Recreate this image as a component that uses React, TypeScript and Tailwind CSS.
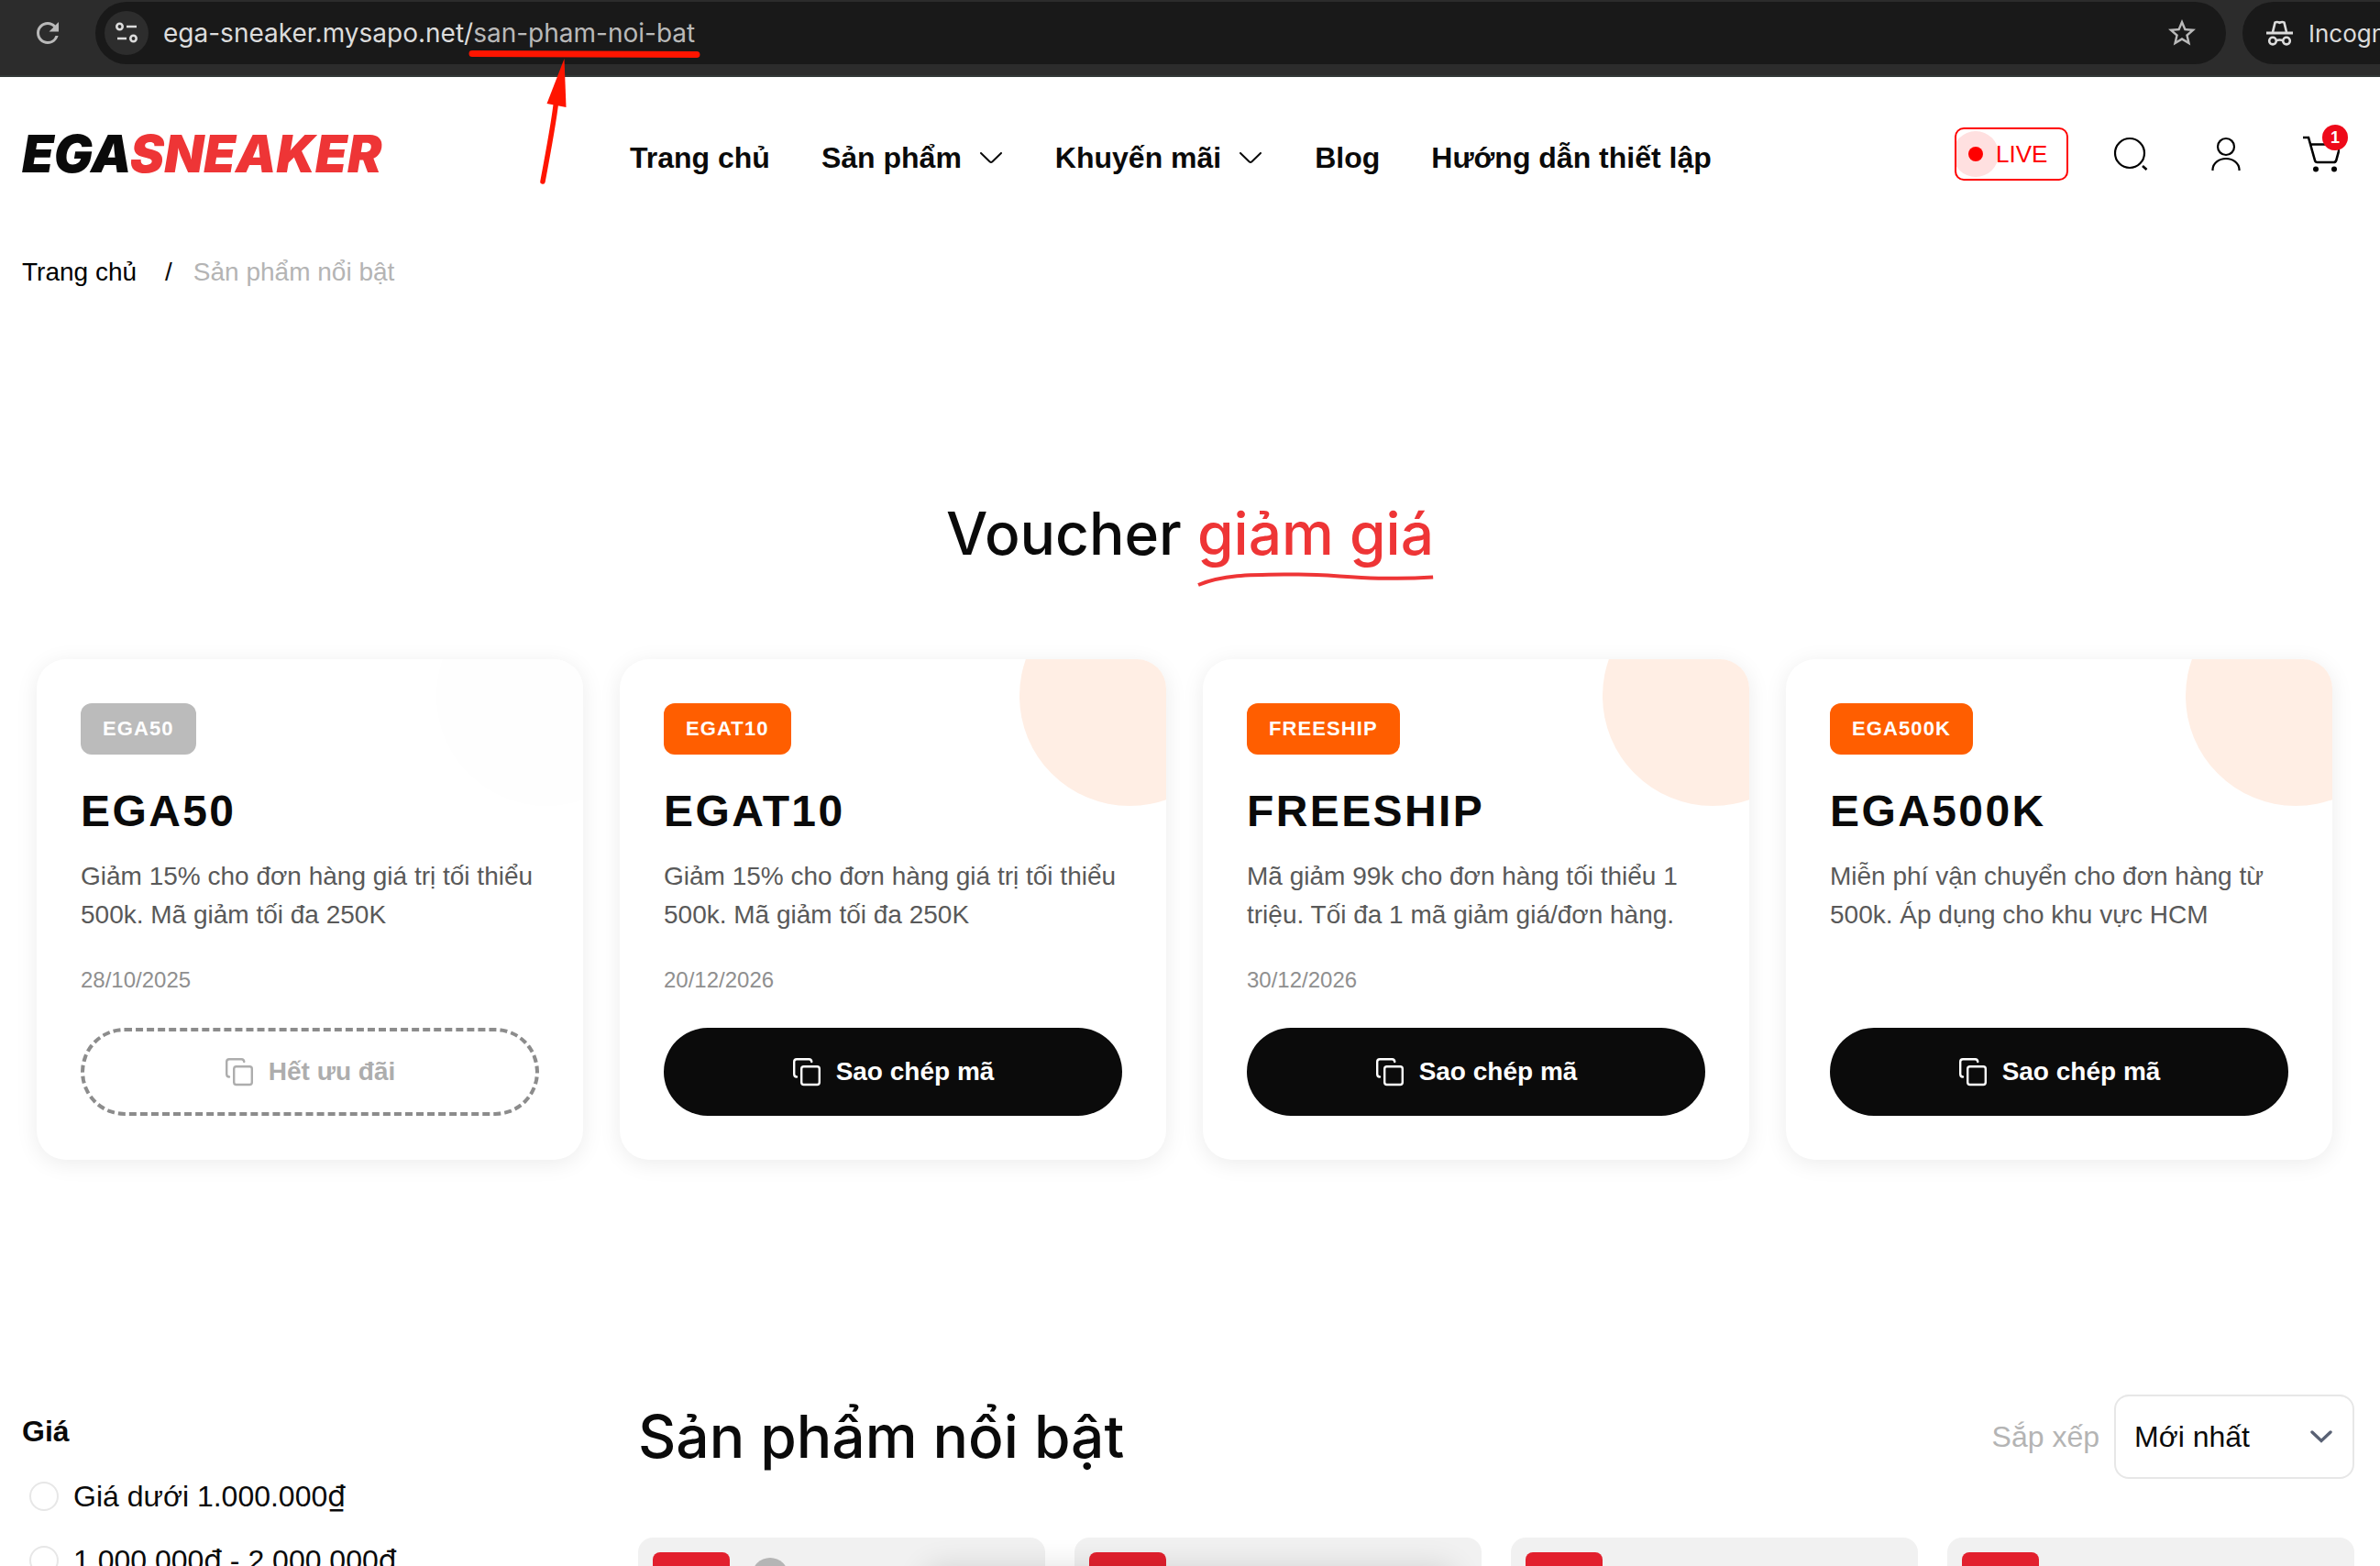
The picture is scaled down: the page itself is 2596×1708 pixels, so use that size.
import { MdRefresh, MdStarBorder } from "react-icons/md";

type Voucher = {
  code: string;
  description: string;
  expires?: string;
  soldOut?: boolean;
};

const vouchers: Voucher[] = [
  {
    code: "EGA50",
    description:
      "Giảm 15% cho đơn hàng giá trị tối thiểu 500k. Mã giảm tối đa 250K",
    expires: "28/10/2025",
    soldOut: true,
  },
  {
    code: "EGAT10",
    description:
      "Giảm 15% cho đơn hàng giá trị tối thiểu 500k. Mã giảm tối đa 250K",
    expires: "20/12/2026",
  },
  {
    code: "FREESHIP",
    description:
      "Mã giảm 99k cho đơn hàng tối thiểu 1 triệu. Tối đa 1 mã giảm giá/đơn hàng.",
    expires: "30/12/2026",
  },
  {
    code: "EGA500K",
    description: "Miễn phí vận chuyển cho đơn hàng từ 500k. Áp dụng cho khu vực HCM",
  },
];

const navItems = [
  { label: "Trang chủ" },
  { label: "Sản phẩm", hasMenu: true },
  { label: "Khuyến mãi", hasMenu: true },
  { label: "Blog" },
  { label: "Hướng dẫn thiết lập" },
];

const priceRanges = ["Giá dưới 1.000.000₫", "1.000.000₫ - 2.000.000₫"];

const BrowserBar = () => (
  <div className="relative flex h-[84px] items-start border-b-2 border-[#323837] bg-[#2c2c2c] pt-[2px] font-[Inter,sans-serif] text-[#dcdcdc]">
    <button aria-label="Reload" className="flex h-[68px] w-[104px] items-center justify-center text-[#b9b9b9]">
      <MdRefresh className="size-9" />
    </button>
    <div className="flex h-[68px] min-w-0 flex-1 items-center rounded-full bg-[#191919] pr-[30px] pl-[10px]">
      <button aria-label="Site information" className="flex size-12 items-center justify-center rounded-full bg-[#2d2d2d]">
        <svg viewBox="0 0 24 24" className="size-6" fill="none" stroke="#dcdcdc" strokeWidth="2.6">
          <circle cx="4.5" cy="5" r="3.2" />
          <path d="M12 5h11M2 18h10" />
          <circle cx="19.5" cy="18" r="3.2" />
        </svg>
      </button>
      <p className="ml-4 flex-1 text-[28px] leading-10 whitespace-nowrap">
        ega-sneaker.mysapo.net/<span className="text-[#b9b9b9]">san-pham-noi-bat</span>
      </p>
      <button aria-label="Bookmark" className="text-[#b9b9b9]">
        <MdStarBorder className="size-9" />
      </button>
    </div>
    <div className="ml-[18px] flex h-[68px] w-[150px] items-center overflow-hidden rounded-l-full bg-[#191919] pl-[26px]">
      <svg viewBox="0 0 29 28" className="h-7 w-[29px] shrink-0" fill="none" stroke="#dcdcdc" strokeWidth="2.6">
        <path d="M0 14h29" strokeWidth="3" />
        <path d="M7 13 L9.5 2.6 Q11.5 1.4 14.5 2.8 Q17.5 1.4 19.5 2.6 L22 13" />
        <circle cx="7" cy="22.6" r="3.8" />
        <circle cx="22" cy="22.6" r="3.8" />
        <path d="M10.6 22.4Q14.5 20.6 18.4 22.4" />
      </svg>
      <span className="ml-[17px] text-[26px] whitespace-nowrap">Incognito</span>
    </div>
    {/* red marker drawn over the path part of the address */}
    <svg className="pointer-events-none absolute top-0 left-[500px] z-10" width="280" height="210" viewBox="500 0 280 210">
      <path d="M515 58.5L760 59.5" stroke="#ff1500" strokeWidth="7" strokeLinecap="round" />
      <path d="M606.5 112Q604 134 592 198" stroke="#ff1500" strokeWidth="5.5" strokeLinecap="round" fill="none" />
      <path d="M615.5 64L596.5 113L617.5 117Z" fill="#ff1500" />
    </svg>
  </div>
);

const NavChevron = () => (
  <svg viewBox="0 0 24 12" className="mr-[2px] h-3 w-6" fill="none" stroke="currentColor" strokeWidth="2" strokeLinecap="round">
    <path d="M1 1L10.5 10.3Q12 11.5 13.5 10.3L23 1" />
  </svg>
);

const Header = () => (
  <header className="flex h-[168px] items-center pr-11 pl-6">
    <a href="#" className="w-[663px] text-[56px] leading-none font-black italic font-[Inter,sans-serif]">
      EGA<span className="text-[#ee3536]">SNEAKER</span>
    </a>
    <nav className="flex flex-1 items-center gap-14 pt-2 text-[32px] leading-10 font-bold">
      {navItems.map((item) => (
        <a key={item.label} href="#" className="flex items-center gap-5 whitespace-nowrap">
          {item.label}
          {item.hasMenu && <NavChevron />}
        </a>
      ))}
    </nav>
    <div className="flex items-center">
      <a href="#" className="relative flex h-[58px] w-[124px] items-center overflow-hidden rounded-[10px] border-2 border-[#ff0000] text-[26px] text-[#ff0000]">
        <span className="-ml-1 flex size-[50px] items-center justify-center rounded-full bg-[#ffe0e0]">
          <span className="size-4 rounded-full bg-[#ff0000]" />
        </span>
        <span className="-ml-[3px]">LIVE</span>
      </a>
      <button aria-label="Tìm kiếm" className="ml-12">
        <svg viewBox="0 0 40 40" className="size-10" fill="none" stroke="#000" strokeWidth="2.2">
          <circle cx="19" cy="19" r="16" />
          <path d="M33 33L37.5 37" strokeWidth="2.6" />
        </svg>
      </button>
      <button aria-label="Tài khoản" className="ml-16">
        <svg viewBox="0 0 40 40" className="size-10" fill="none" stroke="#000" strokeWidth="2.2">
          <circle cx="20" cy="12" r="9" />
          <path d="M5.5 38V36.5C6 30 12 25 20 25S34 30 34.5 36.5V38" />
        </svg>
      </button>
      <button aria-label="Giỏ hàng" className="relative ml-16">
        <svg viewBox="0 0 40 40" className="size-10" fill="none" stroke="#000" strokeWidth="2.6">
          <path d="M0 2H6L13 27Q13.5 29 15.5 29H33.5Q35.5 29 36.2 27L41 9.5H8.5" />
          <circle cx="14" cy="36.5" r="3" fill="#000" stroke="none" />
          <circle cx="34" cy="36.5" r="3" fill="#000" stroke="none" />
        </svg>
        <span className="absolute -top-3 left-[21px] flex size-7 items-center justify-center rounded-full bg-[#ee0a1a] text-[18px] leading-none font-bold text-white">
          1
        </span>
      </button>
    </div>
  </header>
);

const CopyIcon = () => (
  <svg viewBox="0 0 32 32" className="size-8" fill="none" stroke="currentColor" strokeWidth="2.4" strokeLinecap="round">
    <rect x="10.2" y="10.2" width="19.6" height="19.8" rx="2.5" />
    <path d="M5 21.5Q2.2 21.5 2.2 18.5V5Q2.2 2.2 5 2.2H18.5Q21 2.2 21.3 5" />
  </svg>
);

const VoucherCard = ({ code, description, expires, soldOut }: Voucher) => (
  <article className="relative flex flex-col items-start overflow-hidden rounded-[32px] bg-white p-12 shadow-[0_4px_24px_rgba(0,0,0,0.08)]">
    <div className={`absolute -top-20 -right-20 size-60 rounded-full ${soldOut ? "bg-[#fefefe]" : "bg-[#ffeee4]"}`} />
    <span
      className={`rounded-xl px-6 py-3 text-[22px] leading-8 font-bold tracking-wider text-white ${
        soldOut ? "bg-[#bbbbbb]" : "bg-[#ff5e00]"
      }`}
    >
      {code}
    </span>
    <h3 className="mt-8 text-5xl leading-[60px] font-bold tracking-wider">{code}</h3>
    <p className="mt-5 text-[28px] leading-[42px] text-[#595959]">{description}</p>
    <p className="mt-8 h-9 text-2xl leading-9 text-[#8f8f8f]">{expires}</p>
    <button
      disabled={soldOut}
      className={`mt-[34px] flex h-24 w-full items-center justify-center gap-4 rounded-full text-[28px] font-bold ${
        soldOut ? "border-4 border-dashed border-[#8c8c8c] text-[#adadad]" : "bg-[#0b0b0b] text-white"
      }`}
    >
      <CopyIcon />
      {soldOut ? "Hết ưu đãi" : "Sao chép mã"}
    </button>
  </article>
);

const Vouchers = () => (
  <section className="mt-[200px] px-10">
    <h2 className="text-center font-[Inter,sans-serif] text-[64px] leading-[80px] font-medium">
      Voucher{" "}
      <span className="relative inline-block text-[#ee3536]">
        giảm giá
        <svg viewBox="0 0 252 16" preserveAspectRatio="none" className="absolute top-[82px] left-0 h-4 w-full" fill="none">
          <path d="M1 14C30 2 60 3 105 2.5S175 10 251 5.5" stroke="#ee3536" strokeWidth="4" />
        </svg>
      </span>
    </h2>
    <div className="mt-[97px] mr-3 grid grid-cols-4 gap-10">
      {vouchers.map((voucher) => (
        <VoucherCard key={voucher.code} {...voucher} />
      ))}
    </div>
  </section>
);

const PriceFilter = () => (
  <aside className="w-[640px] shrink-0 pt-5">
    <h3 className="text-[32px] leading-10 font-bold">Giá</h3>
    <div className="mt-4">
      {priceRanges.map((range) => (
        <label key={range} className="flex h-[70px] items-center gap-4 pl-2 text-[32px]">
          <input type="radio" name="price" className="size-8 appearance-none rounded-full border-2 border-[#e7e7e7] checked:bg-black" />
          <span>
            {range.split(/(₫)/).map((part, i) =>
              part === "₫" ? (
                <span key={i} className="font-[Inter,sans-serif]">
                  ₫
                </span>
              ) : (
                part
              ),
            )}
          </span>
        </label>
      ))}
    </div>
  </aside>
);

const ProductCard = ({ swatch }: { swatch?: boolean }) => (
  <div className="flex h-[444px] gap-6 rounded-2xl bg-[#f1f1f1] p-4">
    <div className="h-12 w-[84px] rounded-lg bg-[#e2202e]" />
    {swatch && <div className="mt-[6px] size-10 rounded-full bg-[#b5b5b5]" />}
  </div>
);

const Products = () => (
  <section className="min-w-0 flex-1">
    <div className="flex items-center">
      <h1 className="flex-1 font-[Inter,sans-serif] text-[64px] leading-[80px] font-medium">Sản phẩm nổi bật</h1>
      <label htmlFor="sort" className="mr-4 text-[32px] text-[#b4b4b4]">
        Sắp xếp
      </label>
      <div className="relative">
        <select id="sort" className="h-[92px] w-[262px] appearance-none rounded-2xl border-2 border-[#e7e7e7] bg-transparent pl-5 text-[32px]">
          <option>Mới nhất</option>
        </select>
        <svg viewBox="0 0 24 14" className="pointer-events-none absolute top-[39px] right-6 h-[14px] w-6" fill="none" stroke="#596174" strokeWidth="3.4" strokeLinecap="round">
          <path d="M2 2L12 11.5L22 2" />
        </svg>
      </div>
    </div>
    <div className="mt-16 grid grid-cols-4 gap-8">
      <ProductCard swatch />
      <ProductCard />
      <ProductCard />
      <ProductCard />
    </div>
  </section>
);

const App = () => {
  return (
    <div className='h-screen overflow-hidden bg-white font-["Liberation_Sans",Arial,sans-serif] text-[#0a0a0a]'>
      <BrowserBar />
      <Header />
      <div className="flex h-[90px] items-center px-6 text-[28px]">
        <a href="#" className="text-black">
          Trang chủ
        </a>
        <span className="mr-[23px] ml-[31px]">/</span>
        <span className="text-[#b4b4b4]">Sản phẩm nổi bật</span>
      </div>
      <Vouchers />
      <main className="mt-64 flex gap-8 pr-7 pl-6">
        <PriceFilter />
        <Products />
      </main>
      {/* floating bar parked just under the fold, only its shadow shows */}
      <div className="fixed top-full left-1/2 h-20 w-[580px] -translate-x-1/2 rounded-2xl shadow-[0_0_32px_rgba(0,0,0,0.12)]" />
    </div>
  );
};

export default App;
